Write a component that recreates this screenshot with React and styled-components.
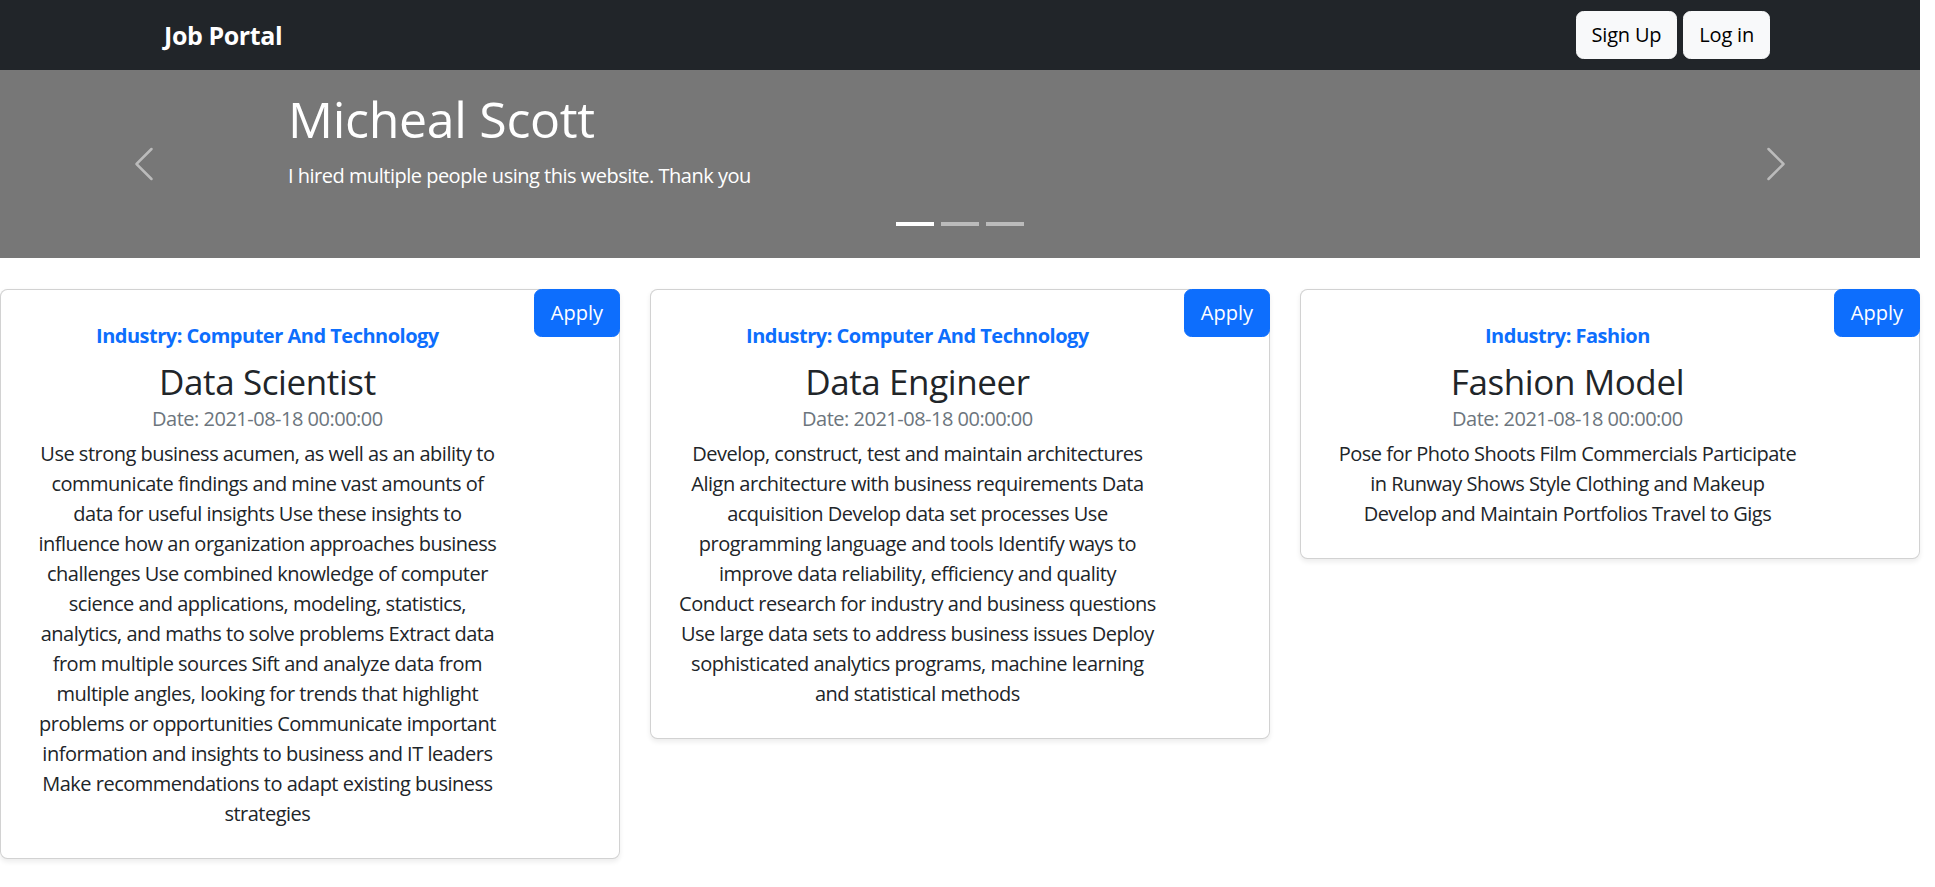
import styled, { createGlobalStyle } from "styled-components";

const jobs = [
  {
    id: 1,
    industry: "Computer And Technology",
    title: "Data Scientist",
    date: "2021-08-18 00:00:00",
    description: [
      "Use strong business acumen, as well as an ability to",
      "communicate findings and mine vast amounts of",
      "data for useful insights Use these insights to",
      "influence how an organization approaches business",
      "challenges Use combined knowledge of computer",
      "science and applications, modeling, statistics,",
      "analytics, and maths to solve problems Extract data",
      "from multiple sources Sift and analyze data from",
      "multiple angles, looking for trends that highlight",
      "problems or opportunities Communicate important",
      "information and insights to business and IT leaders",
      "Make recommendations to adapt existing business",
      "strategies",
    ],
  },
  {
    id: 2,
    industry: "Computer And Technology",
    title: "Data Engineer",
    date: "2021-08-18 00:00:00",
    description: [
      "Develop, construct, test and maintain architectures",
      "Align architecture with business requirements Data",
      "acquisition Develop data set processes Use",
      "programming language and tools Identify ways to",
      "improve data reliability, efficiency and quality",
      "Conduct research for industry and business questions",
      "Use large data sets to address business issues Deploy",
      "sophisticated analytics programs, machine learning",
      "and statistical methods",
    ],
  },
  {
    id: 3,
    industry: "Fashion",
    title: "Fashion Model",
    date: "2021-08-18 00:00:00",
    description: [
      "Pose for Photo Shoots Film Commercials Participate",
      "in Runway Shows Style Clothing and Makeup",
      "Develop and Maintain Portfolios Travel to Gigs",
    ],
  },
];

function Chevron({ flip }) {
  return (
    <svg width="40" height="40" viewBox="0 0 16 16" fill="#fff">
      <path
        transform={flip ? "translate(16 0) scale(-1 1)" : undefined}
        d="M11.354 1.646a.5.5 0 0 1 0 .708L5.707 8l5.647 5.646a.5.5 0 0 1-.708.708l-6-6a.5.5 0 0 1 0-.708l6-6a.5.5 0 0 1 .708 0z"
      />
    </svg>
  );
}

export default function App() {
  return (
    <>
      <GlobalStyle />
      <Page>
        <Navbar>
          <Brand>Job Portal</Brand>
          <NavButtons>
            <LightButton>Sign Up</LightButton>
            <LightButton>Log in</LightButton>
          </NavButtons>
        </Navbar>

        <Carousel>
          <Control>
            <Chevron />
          </Control>
          <Caption>
            <CaptionTitle>Micheal Scott</CaptionTitle>
            <CaptionText>I hired multiple people using this website. Thank you</CaptionText>
          </Caption>
          <Control>
            <Chevron flip />
          </Control>
          <Indicators>
            <Indicator active />
            <Indicator />
            <Indicator />
          </Indicators>
        </Carousel>

        <CardGrid>
          {jobs.map((job) => (
            <Card key={job.id}>
              <CardBody>
                <Industry>Industry: {job.industry}</Industry>
                <JobTitle>{job.title}</JobTitle>
                <JobDate>Date: {job.date}</JobDate>
                <Description>
                  {job.description.map((line, i) => (
                    <Line key={i}>{line}</Line>
                  ))}
                </Description>
              </CardBody>
              <ApplyButton>Apply</ApplyButton>
            </Card>
          ))}
        </CardGrid>
      </Page>
    </>
  );
}

const GlobalStyle = createGlobalStyle`
  body {
    margin: 0;
    background: #fff;
    color: #212529;
    font-family: "Open Sans", "Noto Sans", sans-serif;
    font-size: 20px;
    line-height: 30px;
    letter-spacing: -0.5px;
    overflow-x: hidden;
  }
  * {
    box-sizing: border-box;
  }
`;

const Page = styled.div`
  width: 1920px;
  padding-bottom: 30px;
`;

const Navbar = styled.nav`
  height: 70px;
  background: #212529;
  display: flex;
  align-items: center;
  justify-content: space-between;
  padding: 0 150px 0 164px;
`;

const Brand = styled.span`
  color: #fff;
  font-size: 25px;
  font-weight: 700;
  line-height: 37px;
  letter-spacing: -0.4px;
`;

const NavButtons = styled.div`
  display: flex;
  gap: 6px;
`;

const LightButton = styled.button`
  font-family: inherit;
  font-size: 20px;
  line-height: 30px;
  letter-spacing: -0.2px;
  color: #000;
  background: #f8f9fa;
  border: 1px solid #f8f9fa;
  border-radius: 7.5px;
  padding: 8px 15px;
  cursor: pointer;
`;

const Carousel = styled.section`
  position: relative;
  height: 188px;
  background: #777;
  display: grid;
  grid-template-columns: 288px 1fr 288px;
`;

const Control = styled.div`
  display: flex;
  align-items: center;
  justify-content: center;
  opacity: 0.5;
`;

const Caption = styled.div`
  display: flex;
  flex-direction: column;
  justify-content: flex-end;
  padding-bottom: 67px;
  color: #fff;
`;

const CaptionTitle = styled.h1`
  margin: 0 0 12px;
  font-size: 50px;
  line-height: 60px;
  font-weight: 500;
  letter-spacing: -0.3px;
`;

const CaptionText = styled.p`
  margin: 0;
  font-size: 20px;
  line-height: 30px;
`;

const Indicators = styled.div`
  position: absolute;
  left: 0;
  right: 0;
  bottom: 32px;
  display: flex;
  justify-content: center;
  gap: 7.5px;
`;

const Indicator = styled.span`
  width: 37.5px;
  height: 4px;
  background: #fff;
  opacity: ${(p) => (p.active ? 1 : 0.5)};
`;

const CardGrid = styled.main`
  display: grid;
  grid-template-columns: repeat(3, 620px);
  gap: 30px;
  margin-top: 31px;
  align-items: start;
`;

const Card = styled.article`
  display: flex;
  align-items: flex-start;
  background: #fff;
  border: 1px solid rgba(0, 0, 0, 0.175);
  border-radius: 7.5px;
  box-shadow: 0 2.5px 5px rgba(0, 0, 0, 0.075);
`;

const CardBody = styled.div`
  flex: 1;
  padding: 34px 20px 29px;
  text-align: center;
`;

const Industry = styled.h6`
  margin: 0 0 13px;
  font-size: 20px;
  line-height: 24px;
  font-weight: 700;
  color: #0d6efd;
  letter-spacing: -0.5px;
`;

const JobTitle = styled.h3`
  margin: 0;
  font-size: 35px;
  line-height: 42px;
  font-weight: 500;
  letter-spacing: -0.4px;
`;

const JobDate = styled.p`
  margin: 1px 0 5px;
  color: #6c757d;
`;

const Description = styled.p`
  margin: 0;
`;

const Line = styled.span`
  display: block;
  white-space: nowrap;
`;

const ApplyButton = styled.button`
  flex: none;
  margin: -1px -1px 0 0;
  font-family: inherit;
  font-size: 20px;
  line-height: 30px;
  letter-spacing: 0;
  color: #fff;
  background: #0d6efd;
  border: 1px solid #0d6efd;
  border-radius: 7.5px;
  padding: 8px 16px;
  cursor: pointer;
`;
